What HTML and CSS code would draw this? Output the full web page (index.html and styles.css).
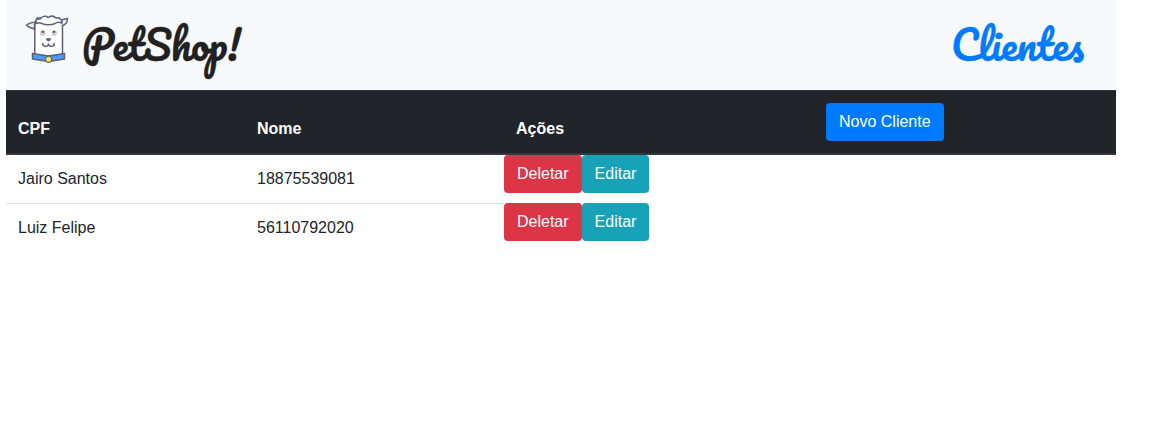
FILE: index.html
```html
<!DOCTYPE html>
<html lang="pt-BR">
<head>
<meta charset="utf-8">
<title>PetShop</title>
<link rel="stylesheet" href="styles.css">
</head>
<body>
<div class="page">
  <header class="navbar">
    <div class="brand">
      <svg class="logo" viewBox="0 0 54 58" width="54" height="58" fill="none" stroke="#5d6079" stroke-width="1.5" stroke-linejoin="round" stroke-linecap="round">
        <path fill="#fff" d="M14.800 14V46H42.500V14L39 8H17Z"/>
        <path fill="#f2f3f8" d="M17 11.500C13 12.500 9.500 12.500 6.500 15C8 17.500 11 17.500 14.500 19V14Z"/>
        <path fill="#f2f3f8" d="M41 10L47.500 8.500C47.500 12 46 14.500 42.500 15.500"/>
        <path fill="#fff" d="M17 13.500C14.500 12 16 8.500 20 9C22 6 26 5.500 28 7.500C31 5.500 34 6 36 8C39 7 42.500 10 42 13C39 11.500 37 12 35 13.500C31 15.500 25 15 22 13.500C20 12.500 18.500 12.500 17 13.500Z"/>
        <g stroke="none"><circle cx="22.700" cy="23.300" r="2.800" fill="#cfd0d6"/><circle cx="34.300" cy="23.300" r="2.800" fill="#cfd0d6"/><circle cx="23" cy="21.800" r="1.300" fill="#555a78"/><circle cx="34" cy="21.800" r="1.300" fill="#555a78"/><path fill="#555a78" d="M26 28.200H31L30.300 30.500L28.500 31.500L26.700 30.500Z"/></g>
        <path d="M22.700 33.500C22.500 37 28 37.500 28.500 34C29 37.500 34.500 37 34.300 33.500"/>
        <path fill="#4a9cf5" d="M12.500 43.500L28.500 46L44.500 43.500V49L28.500 51.500L12.500 49Z"/>
        <circle cx="28.600" cy="49.300" r="3.100" stroke-width="1.100" fill="#ffe44d"/>
      </svg>
      <span class="script">PetShop!</span>
    </div>
    <a class="script nav-link">Clientes</a>
  </header>
  <table class="table">
    <colgroup><col class="col-cpf"><col class="col-name"><col class="col-actions"><col class="col-new"></colgroup>
    <thead>
      <tr><th>CPF</th><th>Nome</th><th>Ações</th><th><button class="btn primary">Novo Cliente</button></th></tr>
    </thead>
    <tbody>
      <tr class="first"><td>Jairo Santos</td><td>18875539081</td><td class="actions"><button class="btn danger">Deletar</button><button class="btn info">Editar</button></td></tr>
      <tr class="second"><td>Luiz Felipe</td><td>56110792020</td><td class="actions"><button class="btn danger">Deletar</button><button class="btn info">Editar</button></td></tr>
    </tbody>
  </table>
</div>
</body>
</html>
```
FILE: styles.css
```css
* { box-sizing: border-box; }
body {
  margin: 0;
  background: #fff;
  color: #212529;
  font: 16px/24px "Liberation Sans", Arial, sans-serif;
}
.page { width: 1110px; margin-left: 6px; }
.navbar {
  display: flex;
  justify-content: space-between;
  height: 90px;
  padding: 0 32px 0 14px;
  background: #f8f9fa;
}
.brand { display: flex; align-items: flex-start; }
.logo { margin-top: 10px; }
.script {
  margin: 14px 0 0 8px;
  color: #212121;
  font: 400 40px/60px Pacifico, Lato, cursive;
  -webkit-text-stroke: 0.3px currentColor;
}
.nav-link { color: #007bff; }
.table {
  width: 1110px;
  table-layout: fixed;
  border-collapse: separate;
  border-spacing: 0;
}
.col-cpf { width: 239px; }
.col-name { width: 259px; }
.col-actions { width: 310px; }
.col-new { width: 302px; }
th {
  height: 65px;
  padding: 11px 12px 12px;
  border-top: 1px solid #32383e;
  border-bottom: 2px solid #32383e;
  background: #212529;
  color: #fff;
  text-align: left;
  vertical-align: bottom;
}
th:last-child { vertical-align: top; padding-top: 12px; padding-bottom: 0; }
td { height: 48px; padding: 12px 12px 0; vertical-align: top; }
.second td { border-top: 1px solid #dee2e6; }
.table td.actions { padding: 0; border-top: 0; }
.actions { font-size: 0; }
.btn {
  display: inline-block;
  height: 38px;
  padding: 6px 12px;
  border: 1px solid transparent;
  border-radius: 4px;
  color: #fff;
  font: 16px/24px "Liberation Sans", Arial, sans-serif;
  vertical-align: top;
}
.primary { background: #007bff; }
.danger { background: #dc3545; }
.info { background: #17a2b8; }
```
